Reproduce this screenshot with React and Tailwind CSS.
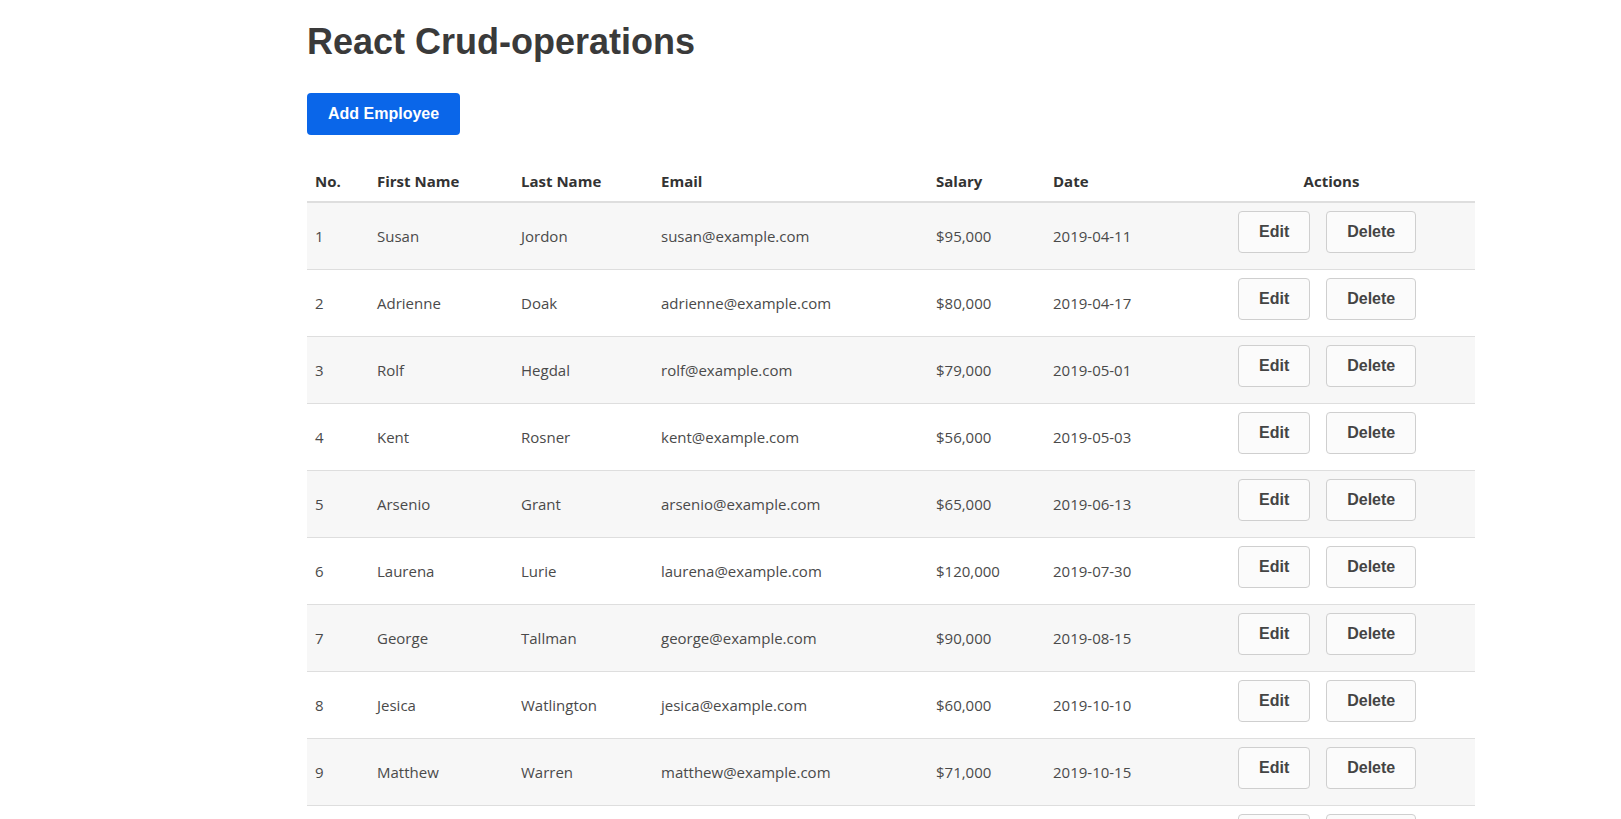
import React from "react";

const rows = [
  [1, "Susan", "Jordon", "susan@example.com", "$95,000", "2019-04-11"],
  [2, "Adrienne", "Doak", "adrienne@example.com", "$80,000", "2019-04-17"],
  [3, "Rolf", "Hegdal", "rolf@example.com", "$79,000", "2019-05-01"],
  [4, "Kent", "Rosner", "kent@example.com", "$56,000", "2019-05-03"],
  [5, "Arsenio", "Grant", "arsenio@example.com", "$65,000", "2019-06-13"],
  [6, "Laurena", "Lurie", "laurena@example.com", "$120,000", "2019-07-30"],
  [7, "George", "Tallman", "george@example.com", "$90,000", "2019-08-15"],
  [8, "Jesica", "Watlington", "jesica@example.com", "$60,000", "2019-10-10"],
  [9, "Matthew", "Warren", "matthew@example.com", "$71,000", "2019-10-15"],
  [10, "Lyndsey", "Follette", "lyndsey@example.com", "$110,000", "2020-01-15"],
];

const btn =
  "mb-2 rounded-[4px] border border-[#cfcfcf] bg-[#fbfbfb] px-5 py-[11px] text-[16px] leading-[18px] font-bold text-[#444] font-['Liberation_Sans',Arial,sans-serif]";

const th = "px-2 pt-[7px] pb-[9px] font-bold text-[#333]";

export default function App() {
  return (
    <div className="min-h-screen bg-white pl-[307px] font-['Open_Sans',sans-serif] text-[#444]">
      <div className="w-[1168px]">
        <h1 className="mt-[22px] text-[36px] leading-[40px] font-bold text-[#3a3a3a] font-['Liberation_Sans',Arial,sans-serif]">
          React Crud-operations
        </h1>
        <button className="mt-[31px] rounded-[4px] bg-[#0a66e9] px-[21px] py-[12px] text-[16px] leading-[18px] font-bold text-white font-['Liberation_Sans',Arial,sans-serif]">
          Add Employee
        </button>
        <table className="mt-[28px] w-[1168px] table-fixed border-collapse text-[15px] leading-[22px]">
          <colgroup>
            <col className="w-[62px]" />
            <col className="w-[144px]" />
            <col className="w-[140px]" />
            <col className="w-[275px]" />
            <col className="w-[117px]" />
            <col className="w-[143px]" />
            <col className="w-[287px]" />
          </colgroup>
          <thead>
            <tr className="border-b-2 border-[#dedede]">
              <th className={th + " text-left"}>No.</th>
              <th className={th + " text-left"}>First Name</th>
              <th className={th + " text-left"}>Last Name</th>
              <th className={th + " text-left"}>Email</th>
              <th className={th + " text-left"}>Salary</th>
              <th className={th + " text-left"}>Date</th>
              <th className={th + " text-center"}>Actions</th>
            </tr>
          </thead>
          <tbody>
            {rows.map((r, i) => (
              <tr
                key={r[0]}
                className={
                  "border-b border-[#dedede] " + (i % 2 === 0 ? "bg-[#f7f7f7]" : "bg-white")
                }
              >
                {r.map((c, j) => (
                  <td key={j} className="px-2 py-2 align-middle font-normal text-[#4a4a4a]">
                    {c}
                  </td>
                ))}
                <td className="py-2 pl-[50px] align-middle">
                  <div className="flex gap-4">
                    <button className={btn}>Edit</button>
                    <button className={btn}>Delete</button>
                  </div>
                </td>
              </tr>
            ))}
          </tbody>
        </table>
      </div>
    </div>
  );
}
